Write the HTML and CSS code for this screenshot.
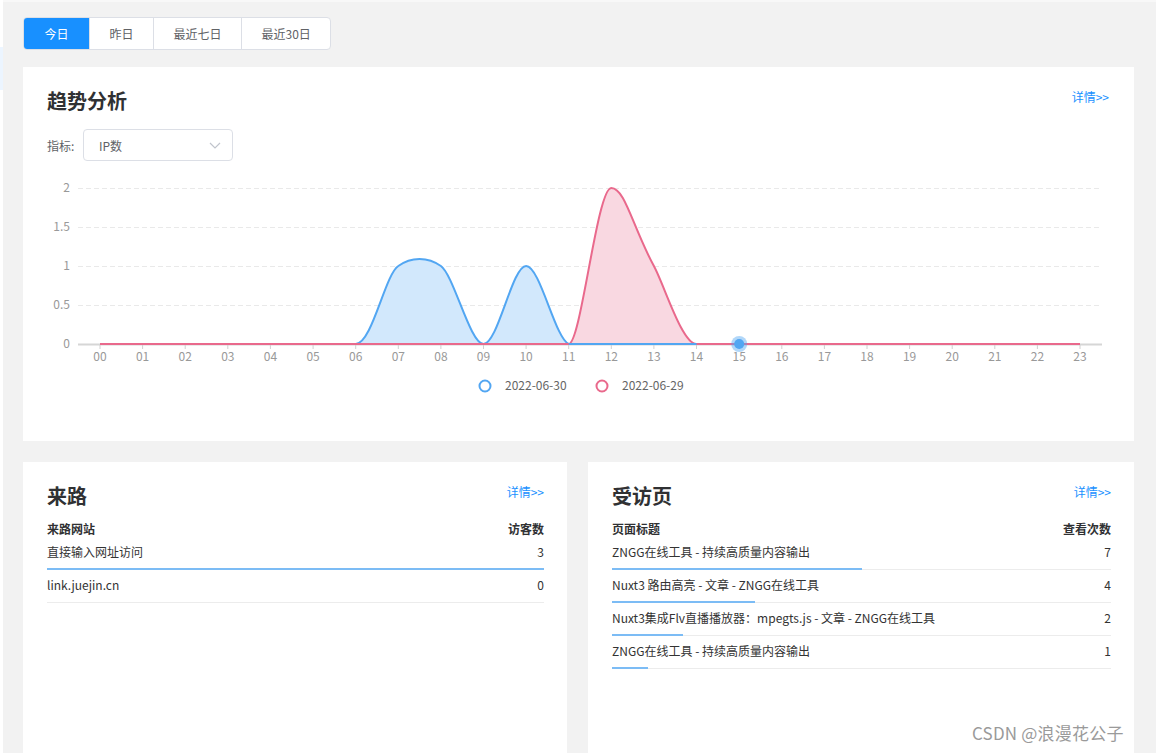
FILE: index.html
```html
<!DOCTYPE html>
<html lang="zh-CN">
<head>
<meta charset="utf-8">
<title>统计</title>
<link rel="stylesheet" href="styles.css">
</head>
<body>
<div class="page">
  <aside class="side"><div class="side-active"></div></aside>
  <main class="main">
    <div class="tabs">
      <div class="tab active">今日</div>
      <div class="tab">昨日</div>
      <div class="tab">最近七日</div>
      <div class="tab">最近30日</div>
    </div>

    <section class="card trend">
      <div class="card-head pad">
        <h2 class="title">趋势分析</h2>
        <a class="more">详情&gt;&gt;</a>
      </div>
      <div class="filter pad">
        <span class="filter-label">指标:</span>
        <div class="select">
          <span>IP数</span>
          <svg class="chev" width="12" height="7" viewBox="0 0 12 7"><path d="M1 1 L6 6 L11 1" fill="none" stroke="#c0c4cc" stroke-width="1.2"/></svg>
        </div>
      </div>
      <svg class="chart" width="1111" height="271" viewBox="0 0 1111 271">
        <g class="grid" stroke="#e9e9e9" stroke-width="1" stroke-dasharray="5 3">
          <line x1="55" y1="18.5" x2="1077" y2="18.5"/>
          <line x1="55" y1="57.5" x2="1077" y2="57.5"/>
          <line x1="55" y1="96.5" x2="1077" y2="96.5"/>
          <line x1="55" y1="135.5" x2="1077" y2="135.5"/>
        </g>
        <g class="ylab" font-size="12" fill="#999" text-anchor="end">
          <text x="47" y="22">2</text>
          <text x="47" y="61">1.5</text>
          <text x="47" y="100">1</text>
          <text x="47" y="139">0.5</text>
          <text x="47" y="178">0</text>
        </g>
        <line x1="55" y1="174.5" x2="1079" y2="174.5" stroke="#d6d6d6" stroke-width="2"/>
        <g stroke="#d0d0d0" stroke-width="1">
          <line x1="77" y1="175" x2="77" y2="179"/><line x1="119.6" y1="175" x2="119.6" y2="179"/>
          <line x1="162.2" y1="175" x2="162.2" y2="179"/><line x1="204.8" y1="175" x2="204.8" y2="179"/>
          <line x1="247.4" y1="175" x2="247.4" y2="179"/><line x1="290.1" y1="175" x2="290.1" y2="179"/>
          <line x1="332.7" y1="175" x2="332.7" y2="179"/><line x1="375.3" y1="175" x2="375.3" y2="179"/>
          <line x1="417.9" y1="175" x2="417.9" y2="179"/><line x1="460.5" y1="175" x2="460.5" y2="179"/>
          <line x1="503.1" y1="175" x2="503.1" y2="179"/><line x1="545.7" y1="175" x2="545.7" y2="179"/>
          <line x1="588.3" y1="175" x2="588.3" y2="179"/><line x1="630.9" y1="175" x2="630.9" y2="179"/>
          <line x1="673.5" y1="175" x2="673.5" y2="179"/><line x1="716.2" y1="175" x2="716.2" y2="179"/>
          <line x1="758.8" y1="175" x2="758.8" y2="179"/><line x1="801.4" y1="175" x2="801.4" y2="179"/>
          <line x1="844" y1="175" x2="844" y2="179"/><line x1="886.6" y1="175" x2="886.6" y2="179"/>
          <line x1="929.2" y1="175" x2="929.2" y2="179"/><line x1="971.8" y1="175" x2="971.8" y2="179"/>
          <line x1="1014.4" y1="175" x2="1014.4" y2="179"/><line x1="1057" y1="175" x2="1057" y2="179"/>
        </g>
        <g class="xlab" font-size="12" fill="#999" text-anchor="middle">
          <text x="77" y="191">00</text><text x="119.6" y="191">01</text><text x="162.2" y="191">02</text>
          <text x="204.8" y="191">03</text><text x="247.4" y="191">04</text><text x="290.1" y="191">05</text>
          <text x="332.7" y="191">06</text><text x="375.3" y="191">07</text><text x="417.9" y="191">08</text>
          <text x="460.5" y="191">09</text><text x="503.1" y="191">10</text><text x="545.7" y="191">11</text>
          <text x="588.3" y="191">12</text><text x="630.9" y="191">13</text><text x="673.5" y="191">14</text>
          <text x="716.2" y="191">15</text><text x="758.8" y="191">16</text><text x="801.4" y="191">17</text>
          <text x="844" y="191">18</text><text x="886.6" y="191">19</text><text x="929.2" y="191">20</text>
          <text x="971.8" y="191">21</text><text x="1014.4" y="191">22</text><text x="1057" y="191">23</text>
        </g>
        <!-- 2022-06-30 -->
        <path d="M332.7,174 C349,174 362,104.5 375.3,96 C388,86.5 405,86.5 417.9,96 C431,105.5 447,174 460.5,174 C475,174 489,96 503.1,96 C517,96 532,168 545.7,174 Z" fill="#d2e8fc"/>
        <path d="M77,174 L332.7,174 C349,174 362,104.5 375.3,96 C388,86.5 405,86.5 417.9,96 C431,105.5 447,174 460.5,174 C475,174 489,96 503.1,96 C517,96 532,168 545.7,174 L1057,174" fill="none" stroke="#52a6f2" stroke-width="2"/>
        <!-- 2022-06-29 -->
        <path d="M545.7,174 C558,174 574,18 588.3,18 C602,18 609.6,57 630.9,96 C641.5,115.5 659,174 673.5,174 Z" fill="#f9d8e1"/>
        <path d="M77,174 L545.7,174 C558,174 574,18 588.3,18 C602,18 609.6,57 630.9,96 C641.5,115.5 659,174 673.5,174 L1057,174" fill="none" stroke="#e9698c" stroke-width="2"/>
        <path d="M545.7,174 L673.5,174" stroke="#52a6f2" stroke-width="2"/>
        <circle cx="716.2" cy="174" r="8" fill="#52a6f2" opacity="0.45"/>
        <circle cx="716.2" cy="174" r="5" fill="#52a6f2"/>
        <!-- legend -->
        <circle cx="462" cy="216" r="5.5" fill="none" stroke="#52a6f2" stroke-width="2"/>
        <text x="482" y="220" font-size="12" fill="#666">2022-06-30</text>
        <circle cx="579" cy="216" r="5.5" fill="none" stroke="#e9698c" stroke-width="2"/>
        <text x="599" y="220" font-size="12" fill="#666">2022-06-29</text>
      </svg>
    </section>

    <div class="cols">
      <section class="card list-card">
        <div class="card-head">
          <h2 class="title">来路</h2>
          <a class="more">详情&gt;&gt;</a>
        </div>
        <div class="thead"><span>来路网站</span><span>访客数</span></div>
        <div class="row">
          <div class="line"><span>直接输入网址访问</span><span>3</span></div>
          <div class="track"><div class="bar" style="width:100%"></div></div>
        </div>
        <div class="row">
          <div class="line"><span>link.juejin.cn</span><span>0</span></div>
          <div class="track"><div class="bar" style="width:0%"></div></div>
        </div>
      </section>

      <section class="card list-card">
        <div class="card-head">
          <h2 class="title">受访页</h2>
          <a class="more">详情&gt;&gt;</a>
        </div>
        <div class="thead"><span>页面标题</span><span>查看次数</span></div>
        <div class="row">
          <div class="line"><span>ZNGG在线工具 - 持续高质量内容输出</span><span>7</span></div>
          <div class="track"><div class="bar" style="width:50%"></div></div>
        </div>
        <div class="row">
          <div class="line"><span>Nuxt3 路由高亮 - 文章 - ZNGG在线工具</span><span>4</span></div>
          <div class="track"><div class="bar" style="width:28.57%"></div></div>
        </div>
        <div class="row">
          <div class="line"><span>Nuxt3集成Flv直播播放器：mpegts.js - 文章 - ZNGG在线工具</span><span>2</span></div>
          <div class="track"><div class="bar" style="width:14.29%"></div></div>
        </div>
        <div class="row">
          <div class="line"><span>ZNGG在线工具 - 持续高质量内容输出</span><span>1</span></div>
          <div class="track"><div class="bar" style="width:7.14%"></div></div>
        </div>
      </section>
    </div>
  </main>
</div>
<div class="watermark">CSDN @浪漫花公子</div>
</body>
</html>
```

FILE: styles.css
```css
* { box-sizing: border-box; }
html, body { margin: 0; padding: 0; }
body {
  font-family: "Noto Sans CJK SC", "Noto Sans", sans-serif;
  font-size: 12px;
  color: #333;
  background: #f2f2f2;
  height: 753px;
  overflow: hidden;
  position: relative;
}
.page { display: flex; min-height: 753px; }
.side { width: 3px; background: #fff; flex: none; }
.side-active { margin-top: 47px; height: 43px; background: #ecf5ff; }
.main {
  flex: 1;
  background: #f2f2f2;
  border-top: 2px solid #f8f8f8;
  padding: 15px 22px 0 20px;
}
.tabs {
  display: inline-flex;
  border: 1px solid #dcdfe6;
  border-radius: 4px;
  overflow: hidden;
  background: #fff;
}
.tab {
  height: 31px;
  line-height: 31px;
  padding: 0 19.5px;
  color: #606266;
  font-size: 12px;
  border-left: 1px solid #dcdfe6;
}
.tab:first-child { border-left: 0; padding: 0 20.5px; }
.tab.active { background: #1890ff; color: #fff; }

.card { background: #fff; }
.trend { margin-top: 17px; height: 374px; }
.pad { padding-left: 24px; padding-right: 25px; }
.card-head {
  display: flex;
  justify-content: space-between;
  align-items: flex-start;
  padding-top: 20px;
}
.title {
  margin: 0;
  font-size: 20px;
  line-height: 28px;
  font-weight: 700;
  color: #303133;
}
.more { color: #1890ff; font-size: 12px; line-height: 20px; cursor: pointer; }
.filter { display: flex; align-items: center; margin-top: 14px; }
.filter-label { color: #606266; width: 36px; }
.select {
  width: 150px;
  height: 32px;
  border: 1px solid #dcdfe6;
  border-radius: 4px;
  display: flex;
  align-items: center;
  justify-content: space-between;
  padding: 0 11px 0 15px;
  color: #606266;
}
.chart { display: block; margin-top: 9px; font-family: "Noto Sans CJK SC", "Noto Sans", sans-serif; }

.cols {
  display: grid;
  grid-template-columns: 544px 1fr;
  column-gap: 21px;
  margin-top: 21px;
}
.list-card { height: 320px; padding: 0 23px 0 24px; }
.thead {
  display: flex;
  justify-content: space-between;
  font-weight: 700;
  color: #303133;
  line-height: 20px;
  margin-top: 9px;
}
.row { padding-top: 3px; padding-bottom: 2px; }
.line {
  display: flex;
  justify-content: space-between;
  line-height: 20px;
  color: #333;
}
.track {
  margin-top: 6px;
  height: 2px;
  background: linear-gradient(to bottom, transparent 50%, #ececec 50%);
}
.bar { height: 2px; background: #7cbcf5; }

.watermark {
  position: absolute;
  left: 972px;
  top: 721px;
  font-size: 17px;
  line-height: 24px;
  color: #9a9a9a;
  text-shadow: 1px 1px 1px #fff;
  letter-spacing: 0.2px;
  white-space: nowrap;
}
```
